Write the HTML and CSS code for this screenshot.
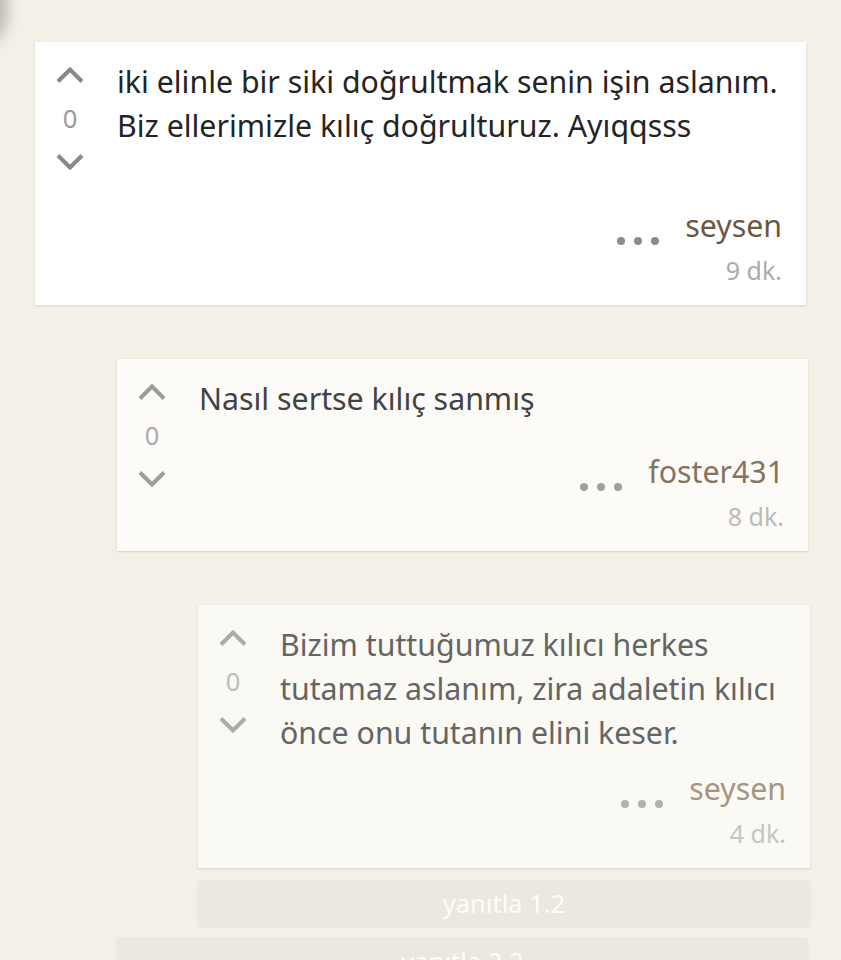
FILE: index.html
```html
<!DOCTYPE html>
<html lang="tr">
<head>
<meta charset="utf-8">
<title>Yorumlar</title>
<link rel="stylesheet" href="styles.css">
</head>
<body>
<div class="edge-shadow"></div>
<main class="thread">
  <article class="comment lvl1">
    <div class="vote">
      <svg class="chev" viewBox="0 0 28 16"><polyline points="2,14.5 14,2.5 26,14.5"/></svg>
      <span class="count">0</span>
      <svg class="chev down" viewBox="0 0 28 16"><polyline points="2,1.5 14,13.5 26,1.5"/></svg>
    </div>
    <div class="content">
      <p class="text text-3">iki elinle bir siki doğrultmak senin işin aslanım. Biz ellerimizle kılıç doğrulturuz. Ayıqqsss</p>
      <div class="footer">
        <span class="dots"><i></i><i></i><i></i></span>
        <div class="meta"><span class="author">seysen</span><span class="time">9 dk.</span></div>
      </div>
    </div>
  </article>

  <div class="replies">
    <article class="comment lvl2">
      <div class="vote">
        <svg class="chev" viewBox="0 0 28 16"><polyline points="2,14.5 14,2.5 26,14.5"/></svg>
        <span class="count">0</span>
        <svg class="chev down" viewBox="0 0 28 16"><polyline points="2,1.5 14,13.5 26,1.5"/></svg>
      </div>
      <div class="content">
        <p class="text text-short">Nasıl sertse kılıç sanmış</p>
        <div class="footer">
          <span class="dots"><i></i><i></i><i></i></span>
          <div class="meta"><span class="author">foster431</span><span class="time">8 dk.</span></div>
        </div>
      </div>
    </article>

    <div class="replies">
      <article class="comment lvl3">
        <div class="vote">
          <svg class="chev" viewBox="0 0 28 16"><polyline points="2,14.5 14,2.5 26,14.5"/></svg>
          <span class="count">0</span>
          <svg class="chev down" viewBox="0 0 28 16"><polyline points="2,1.5 14,13.5 26,1.5"/></svg>
        </div>
        <div class="content">
          <p class="text">Bizim tuttuğumuz kılıcı herkes tutamaz aslanım, zira adaletin kılıcı önce onu tutanın elini keser.</p>
          <div class="footer">
            <span class="dots"><i></i><i></i><i></i></span>
            <div class="meta"><span class="author">seysen</span><span class="time">4 dk.</span></div>
          </div>
        </div>
      </article>
      <button class="reply-bar">yanıtla 1.2</button>
    </div>
    <button class="reply-bar">yanıtla 2.2</button>
  </div>
</main>
</body>
</html>
```

FILE: styles.css
```css
* { box-sizing: border-box; }

html, body {
  margin: 0;
  padding: 0;
  background: #f3f1e7;
  font-family: "Noto Sans", "Open Sans", sans-serif;
  overflow: hidden;
}

body {
  position: relative;
  height: 960px;
}

.edge-shadow {
  position: absolute;
  left: -34px;
  top: -26px;
  width: 42px;
  height: 70px;
  border-radius: 50%;
  background: rgba(140, 140, 140, 0.55);
  filter: blur(7px);
}

.thread {
  padding: 42px 0 0 35px;
  width: 806px;
}

.comment {
  display: flex;
  background: #ffffff;
  padding: 0 24px 13px 0;
  box-shadow: 0 1px 2px rgba(0, 0, 0, 0.13), 0 0 1px rgba(0, 0, 0, 0.06);
}

.vote {
  width: 82px;
  padding-right: 12px;
  flex: none;
  display: flex;
  flex-direction: column;
  align-items: center;
}

.chev {
  width: 28px;
  height: 16px;
  margin-top: 25px;
  fill: none;
  stroke: #888888;
  stroke-width: 4;
}

.chev.down {
  margin-top: 21px;
}

.count {
  margin-top: 20px;
  font-size: 25.5px;
  line-height: 30px;
  height: 30px;
  color: #9a9a9a;
}

.content {
  flex: 1;
  min-width: 0;
}

.text {
  margin: 0;
  padding-top: 18px;
  font-size: 30.3px;
  line-height: 44px;
  color: #242424;
}

.text-3 { min-height: 150px; }
.text-short { min-height: 79px; }

.footer {
  display: flex;
  justify-content: flex-end;
  margin-top: 12px;
}

.dots {
  display: flex;
  gap: 9px;
  margin-top: 33px;
  margin-right: 26px;
  height: 8px;
}

.dots i {
  width: 8px;
  height: 8px;
  border-radius: 50%;
  background: #8c8c8c;
}

.meta {
  display: flex;
  flex-direction: column;
  align-items: flex-end;
}

.author {
  font-size: 30.3px;
  line-height: 44px;
  color: #6b5741;
}

.time {
  font-size: 25px;
  line-height: 44px;
  color: #ababab;
}

.replies {
  margin: 54px -2px 0 82px;
}

.replies .replies {
  margin-left: 81px;
}

/* second level */
.lvl2 { background: #fcfbf8; }
.lvl2 .chev { stroke: #9c9c9c; }
.lvl2 .count { color: #ababab; }
.lvl2 .text { color: #424242; }
.lvl2 .author { color: #857260; }
.lvl2 .time { color: #bababa; }
.lvl2 .dots i { background: #a0a0a0; }

/* third level */
.lvl3 { background: #faf9f4; }
.lvl3 .chev { stroke: #ababab; }
.lvl3 .count { color: #bdbdbd; }
.lvl3 .text { color: #646464; }
.lvl3 .author { color: #a49583; }
.lvl3 .time { color: #c5c5c5; }
.lvl3 .dots i { background: #b0b0b0; }

.reply-bar {
  display: block;
  width: 100%;
  height: 46px;
  margin-top: 12px;
  border: 0;
  padding: 0;
  background: #ebe8df;
  color: #fdfcf8;
  font-family: "Noto Sans", "Open Sans", sans-serif;
  font-size: 25.5px;
  line-height: 46px;
  text-align: center;
  box-shadow: 0 1px 2px rgba(0, 0, 0, 0.06);
}
```
